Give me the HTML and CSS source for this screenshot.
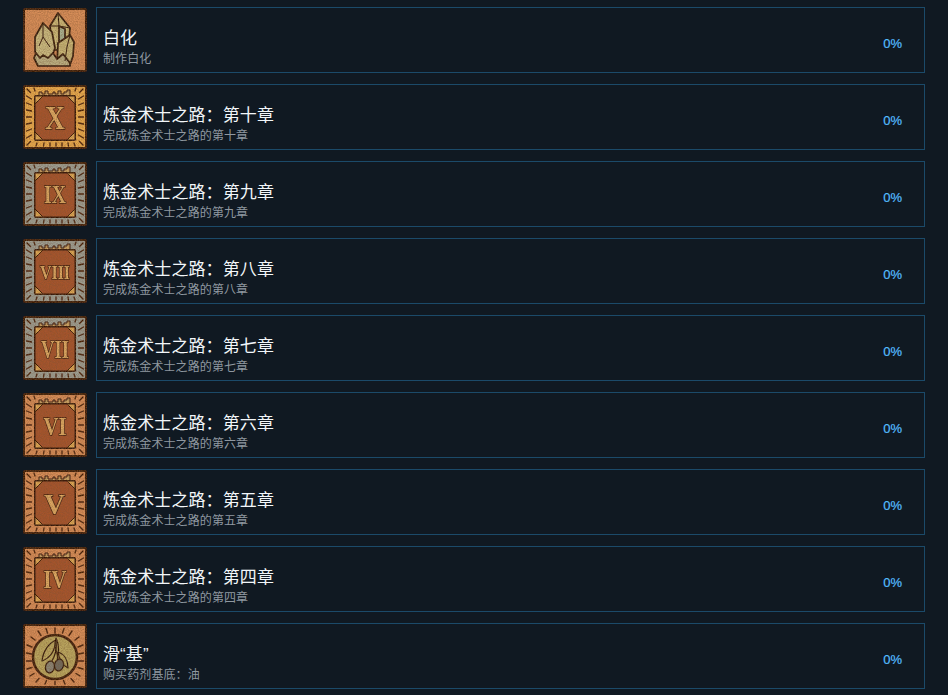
FILE: index.html
```html
<!DOCTYPE html>
<html lang="zh-CN">
<head>
    <meta charset="UTF-8">
    <meta name="viewport" content="width=device-width, initial-scale=1.0">
    <title>成就</title>
    <link rel="stylesheet" href="styles.css">
</head>
<body>
    <!-- shared icon parts -->
    <svg class="defs" width="0" height="0">
        <defs>
            <filter id="grain" x="0" y="0" width="100%" height="100%">
                <feGaussianBlur in="SourceGraphic" stdDeviation="0.4" result="soft"/>
                <feTurbulence type="fractalNoise" baseFrequency="0.9" numOctaves="2" seed="4"/>
                <feColorMatrix type="matrix" values="0 0 0 0 0.2  0 0 0 0 0.08  0 0 0 0 0.03  1 0 0 0 -0.3"/>
                <feComposite in2="soft" operator="in" result="speck"/>
                <feMerge>
                    <feMergeNode in="soft"/>
                    <feMergeNode in="speck"/>
                </feMerge>
            </filter>
            <g id="rays" stroke="#45210f" stroke-width="1.300" stroke-linecap="round" fill="none">
                <path d="M4 4l3.500 3.500M3.500 11l5 3M3.500 18l5 2M3.500 25l5 1M3.500 32h5M3.500 39l5-1M3.500 46l5-2M3.500 53l5-3M4 60l3.500-3.500"/>
                <path d="M60 4l-3.500 3.500M60.500 11l-5 3M60.500 18l-5 2M60.500 25l-5 1M60.500 32h-5M60.500 39l-5-1M60.500 46l-5-2M60.500 53l-5-3M60 60l-3.500-3.500"/>
                <path d="M14 58l-1 3M21 58l-.5 3M27 58v3M33 58v3M39 58v3M45 58l.5 3M51 58l1 3"/>
                <path d="M11 3l1 3M53 3l-1 3"/>
            </g>
            <g id="tome">
                <path d="M16 11V7h3v2h3V6h3v3h5V7h2v2h3V6h3v3h3V7h3V5h3v6z" fill="#c9a264" stroke="#3a1c10" stroke-width="1"/>
                <rect x="11" y="10" width="42" height="46" rx="2" fill="#33190d"/>
                <rect x="12.500" y="11.500" width="39" height="43" rx="2" fill="#a5552e"/>
                <path d="M12 11h8l-8 8zM52 11h-8l8 8zM12 55h8l-8-8zM52 55h-8l8-8z" fill="#dca655" stroke="#3a1c10" stroke-width="1"/>
            </g>
        </defs>
    </svg>

    <main class="list">
        <div class="row">
            <svg class="icon" viewBox="0 0 64 64">
                <rect x="1" y="1" width="62" height="62" rx="1" fill="#d68d58" stroke="#3a1c10" stroke-width="2"/>
                <g stroke="#2e1a10" stroke-width="1.700" stroke-linejoin="round">
                    <path d="M27 18l8-13 12 15-2 22H30z" fill="#c9b676"/>
                    <path d="M36 18l6 3v16h-6z" fill="#a7b08f"/>
                    <path d="M12 29l8-14 9 9 3 16-5 14H15l-3-11z" fill="#c8b87e"/>
                    <path d="M35 35l12-8 4 7-1 14-3 9H34z" fill="#c6b474"/>
                    <path d="M13 45l-2 5 4 8h32v-3l-7-9-6 5-4-6-5 5-5-3-3 3z" fill="#b9ad80"/>
                    <path d="M20 15v14l-4 9M20 29l7 10M35 5l1 13M27 18l9 0 11 2M47 27l-3 12-2 14" fill="none" stroke-width="1"/>
                </g>
            </svg>
            <div class="box">
                <div class="info"><h3>白化</h3><p>制作白化</p></div>
                <span class="pct">0%</span>
            </div>
        </div>

        <div class="row">
            <svg class="icon" viewBox="0 0 64 64">
                <rect x="1" y="1" width="62" height="62" rx="1" fill="#e7a94e" stroke="#3a1c10" stroke-width="2"/>
                <use href="#rays"/><use href="#tome"/>
                <text class="num" x="32" y="44" font-size="34" textLength="20" lengthAdjust="spacingAndGlyphs">X</text>
            </svg>
            <div class="box">
                <div class="info"><h3>炼金术士之路：第十章</h3><p>完成炼金术士之路的第十章</p></div>
                <span class="pct">0%</span>
            </div>
        </div>

        <div class="row">
            <svg class="icon" viewBox="0 0 64 64">
                <rect x="1" y="1" width="62" height="62" rx="1" fill="#9c9e91" stroke="#3a1c10" stroke-width="2"/>
                <use href="#rays"/><use href="#tome"/>
                <text class="num" x="32" y="41" font-size="25" textLength="22" lengthAdjust="spacingAndGlyphs">IX</text>
            </svg>
            <div class="box">
                <div class="info"><h3>炼金术士之路：第九章</h3><p>完成炼金术士之路的第九章</p></div>
                <span class="pct">0%</span>
            </div>
        </div>

        <div class="row">
            <svg class="icon" viewBox="0 0 64 64">
                <rect x="1" y="1" width="62" height="62" rx="1" fill="#9c9e91" stroke="#3a1c10" stroke-width="2"/>
                <use href="#rays"/><use href="#tome"/>
                <text class="num" x="32" y="40" font-size="19" textLength="30" lengthAdjust="spacingAndGlyphs">VIII</text>
            </svg>
            <div class="box">
                <div class="info"><h3>炼金术士之路：第八章</h3><p>完成炼金术士之路的第八章</p></div>
                <span class="pct">0%</span>
            </div>
        </div>

        <div class="row">
            <svg class="icon" viewBox="0 0 64 64">
                <rect x="1" y="1" width="62" height="62" rx="1" fill="#9c9e91" stroke="#3a1c10" stroke-width="2"/>
                <use href="#rays"/><use href="#tome"/>
                <text class="num" x="32" y="42" font-size="25" textLength="28" lengthAdjust="spacingAndGlyphs">VII</text>
            </svg>
            <div class="box">
                <div class="info"><h3>炼金术士之路：第七章</h3><p>完成炼金术士之路的第七章</p></div>
                <span class="pct">0%</span>
            </div>
        </div>

        <div class="row">
            <svg class="icon" viewBox="0 0 64 64">
                <rect x="1" y="1" width="62" height="62" rx="1" fill="#d68d58" stroke="#3a1c10" stroke-width="2"/>
                <use href="#rays"/><use href="#tome"/>
                <text class="num" x="32" y="42" font-size="25" textLength="23" lengthAdjust="spacingAndGlyphs">VI</text>
            </svg>
            <div class="box">
                <div class="info"><h3>炼金术士之路：第六章</h3><p>完成炼金术士之路的第六章</p></div>
                <span class="pct">0%</span>
            </div>
        </div>

        <div class="row">
            <svg class="icon" viewBox="0 0 64 64">
                <rect x="1" y="1" width="62" height="62" rx="1" fill="#d68d58" stroke="#3a1c10" stroke-width="2"/>
                <use href="#rays"/><use href="#tome"/>
                <text class="num" x="31.500" y="44" font-size="30" textLength="21" lengthAdjust="spacingAndGlyphs">V</text>
            </svg>
            <div class="box">
                <div class="info"><h3>炼金术士之路：第五章</h3><p>完成炼金术士之路的第五章</p></div>
                <span class="pct">0%</span>
            </div>
        </div>

        <div class="row">
            <svg class="icon" viewBox="0 0 64 64">
                <rect x="1" y="1" width="62" height="62" rx="1" fill="#d68d58" stroke="#3a1c10" stroke-width="2"/>
                <use href="#rays"/><use href="#tome"/>
                <text class="num" x="32" y="41" font-size="25" textLength="23" lengthAdjust="spacingAndGlyphs">IV</text>
            </svg>
            <div class="box">
                <div class="info"><h3>炼金术士之路：第四章</h3><p>完成炼金术士之路的第四章</p></div>
                <span class="pct">0%</span>
            </div>
        </div>

        <div class="row">
            <svg class="icon" viewBox="0 0 64 64">
                <rect x="1" y="1" width="62" height="62" rx="1" fill="#d68d58" stroke="#3a1c10" stroke-width="2"/>
                <g stroke="#45210f" stroke-width="1.400" stroke-linecap="round">
                    <path d="M32 4v5M23 4.500l1.500 4.500M41 4.500L39.500 9M15 7l3 4.500M49 7l-3 4.500M8 13l4 3M56 13l-4 3M4 21l5 2M60 21l-5 2M3.500 29l5 1M60.500 29l-5 1M3.500 37h5M60.500 37h-5M4 45l5-1.500M60 45l-5-1.500M7 52l4-2.500M57 52l-4-2.500M13 58l3-3.500M51 58l-3-3.500M22 60l1.500-3.500M42 60l-1.500-3.500M32 60.500v-3"/>
                </g>
                <circle cx="32" cy="33" r="22" fill="#b9a55e" stroke="#3a1c10" stroke-width="2.500"/>
                <g stroke="#2e1a10" stroke-width="1.200" fill="#b9a55e" stroke-linejoin="round">
                    <path d="M33 16c-7 3-13 11-14 21 8-3 13-10 14-21z"/>
                    <path d="M33 14c3 6 3 11 2 17-3-5-4-11-2-17z"/>
                    <path d="M35 28c6 2 10 8 10 16-6-3-9-9-10-16z"/>
                    <path d="M33 16c1 7 0 14-4 21M34 29l1 7" fill="none"/>
                    <ellipse cx="27" cy="43" rx="4.500" ry="6" fill="#8a8574" transform="rotate(12 27 43)"/>
                    <ellipse cx="36" cy="41" rx="4.500" ry="6" fill="#6f6b5d" transform="rotate(12 36 41)"/>
                </g>
            </svg>
            <div class="box">
                <div class="info"><h3>滑“基”</h3><p>购买药剂基底：油</p></div>
                <span class="pct">0%</span>
            </div>
        </div>
    </main>
</body>
</html>
```

FILE: styles.css
```css
body {
    margin: 0;
    background-color: #101922;
    font-family: "Liberation Sans", "Noto Sans CJK SC", sans-serif;
    overflow: hidden;
    height: 695px;
}

.defs {
    position: absolute;
}

.list {
    display: flex;
    flex-direction: column;
    gap: 11px;
    padding: 7px 23px 0;
}

.row {
    display: flex;
    align-items: center;
    gap: 9px;
}

.icon {
    width: 64px;
    height: 64px;
    flex-shrink: 0;
    filter: url(#grain);
}

.num {
    font-family: "Liberation Serif", serif;
    font-weight: bold;
    text-anchor: middle;
    fill: #dca862;
    stroke: #3a1c10;
    stroke-width: 1.5;
    paint-order: stroke;
}

.box {
    flex: 1;
    height: 66px;
    box-sizing: border-box;
    border: 1px solid #1b4a69;
    padding: 0 22px 0 6px;
    display: flex;
    align-items: center;
    justify-content: space-between;
}

.info {
    padding-top: 15px;
}

h3 {
    margin: 0;
    font-size: 17px;
    font-weight: normal;
    line-height: 22px;
    letter-spacing: 0.1px;
    color: #f2f6f9;
}

p {
    margin: 1px 0 0;
    font-size: 12px;
    line-height: 16px;
    letter-spacing: 0.1px;
    color: #8f98a0;
}

.pct {
    margin-top: 6px;
    font-size: 13px;
    color: #55bcff;
    -webkit-text-stroke: 0.2px #55bcff;
}
```
